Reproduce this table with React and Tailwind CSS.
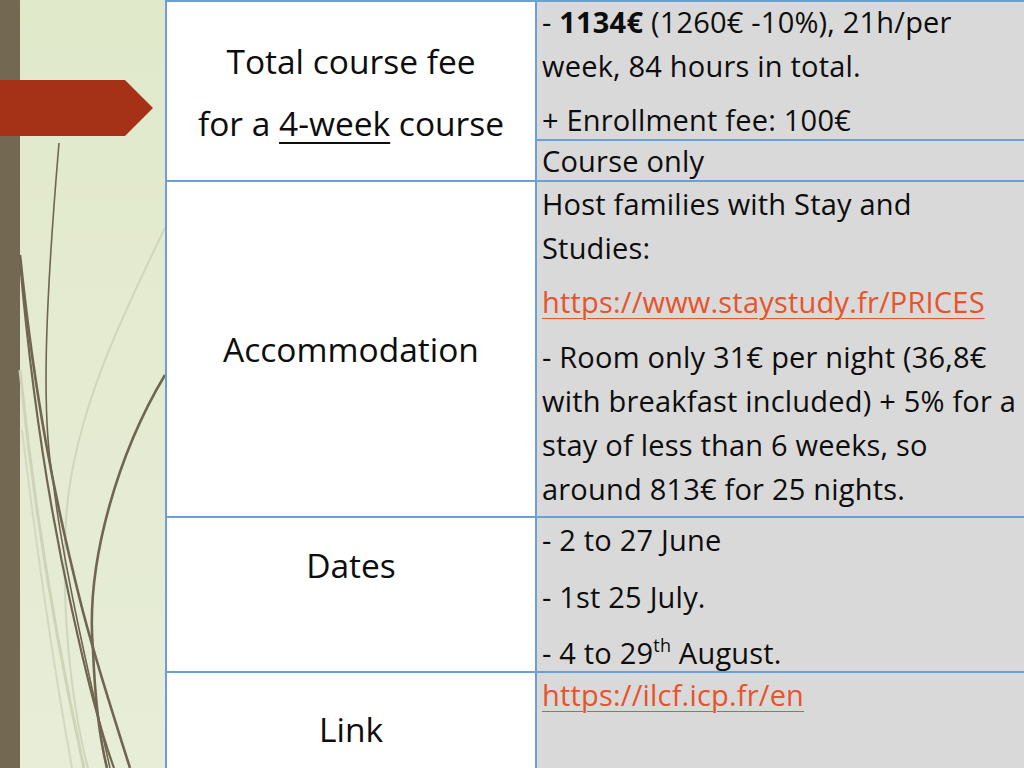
import React from 'react';

const font = { fontFamily: '"Open Sans", Lato, sans-serif' };

const SideDecor = () => (
  <div className="w-[165px] h-full shrink-0 bg-gradient-to-b from-[#e1e9cb] to-[#e7edd7]">
    <svg width="165" height="768" viewBox="0 0 165 768" className="block">
      <rect x="0" y="0" width="20" height="768" fill="#736851" />
      {/* light grass */}
      <path d="M165,228 C120,320 72,420 66,520 C61,600 70,700 88,768" stroke="#cfd6bb" strokeWidth="2" fill="none" />
      <path d="M20,370 C35,520 58,650 84,768" stroke="#cdd4b8" strokeWidth="3" fill="none" />
      <path d="M22,430 C38,560 56,680 72,768" stroke="#d3d9c0" strokeWidth="2" fill="none" />
      {/* dark grass */}
      <path d="M59,143 C44,320 42,420 53,480 C62,560 90,680 110,768" stroke="#6f6550" strokeWidth="1.6" fill="none" />
      <path d="M20,255 C35,400 55,500 80,600 C95,660 115,720 130,768" stroke="#6f6550" strokeWidth="2.6" fill="none" />
      <path d="M20,262 C33,410 52,520 72,610 C85,670 100,730 114,768" stroke="#6f6550" strokeWidth="2.2" fill="none" />
      <path d="M165,375 C120,450 85,560 93,650 C95,700 100,740 107,768" stroke="#6f6550" strokeWidth="2.6" fill="none" />
      {/* red arrow */}
      <polygon points="0,80 125,80 153,108 125,136 0,136" fill="#a53116" />
    </svg>
  </div>
);

const Line = ({ children, className = 'leading-[44px]' }) => (
  <div className={`whitespace-nowrap ${className}`}>{children}</div>
);

const Link = ({ children }) => (
  <span className="text-[#e8532a] underline decoration-1 underline-offset-[5px]">{children}</span>
);

export default function App() {
  return (
    <div className="w-[1024px] h-[768px] overflow-hidden flex bg-white text-[#0d0d0d]" style={font}>
      <SideDecor />
      <div className="flex-1 flex flex-col border-l-2 border-t-2 border-[#6b9fd9]">
        {/* row 1 */}
        <div className="grid grid-cols-[370px_1fr] grid-rows-1 h-[180px] border-b-2 border-[#6b9fd9] shrink-0">
          <div className="bg-white border-r-2 border-[#6b9fd9] text-[33.5px] leading-[62px] text-center pt-[28px]">
            <div>Total course fee</div>
            <div>
              for a <span className="underline decoration-2 underline-offset-[6px]">4-week</span> course
            </div>
          </div>
          <div className="flex flex-col text-[29px] tracking-[0.2px] overflow-hidden">
            <div className="h-[139px] bg-[#d9d9d9] border-b-2 border-[#6b9fd9] px-[5px] overflow-hidden shrink-0">
              <Line className="leading-[44px] -mt-[2px]">
                - <b className="font-bold">1134€</b> (1260€ -10%), 21h/per
              </Line>
              <Line>week, 84 hours in total.</Line>
              <Line className="leading-[44px] mt-[10px]">+ Enrollment fee: 100€</Line>
            </div>
            <div className="flex-1 bg-[#d9d9d9] px-[5px]">
              <Line className="leading-[39px]">Course only</Line>
            </div>
          </div>
        </div>

        {/* row 2 */}
        <div className="grid grid-cols-[370px_1fr] grid-rows-1 h-[336px] border-b-2 border-[#6b9fd9] shrink-0">
          <div className="bg-white border-r-2 border-[#6b9fd9] text-[33.5px] flex items-center justify-center">
            Accommodation
          </div>
          <div className="bg-[#d9d9d9] text-[29px] tracking-[0.2px] px-[5px] overflow-hidden">
            <Line>Host families with Stay and</Line>
            <Line>Studies:</Line>
            <Line className="leading-[44px] mt-[10px]">
              <Link>https://www.staystudy.fr/PRICES</Link>
            </Line>
            <Line className="leading-[44px] mt-[11px]">- Room only 31€ per night (36,8€</Line>
            <Line>with breakfast included) + 5% for a</Line>
            <Line>stay of less than 6 weeks, so</Line>
            <Line>around 813€ for 25 nights.</Line>
          </div>
        </div>

        {/* row 3 */}
        <div className="grid grid-cols-[370px_1fr] grid-rows-1 h-[155px] border-b-2 border-[#6b9fd9] shrink-0">
          <div className="bg-white border-r-2 border-[#6b9fd9] text-[33.5px] leading-[44px] text-center pt-[25px]">
            Dates
          </div>
          <div className="bg-[#d9d9d9] text-[29px] tracking-[0.2px] px-[5px] overflow-hidden">
            <Line>- 2 to 27 June</Line>
            <Line className="leading-[44px] mt-[13px]">- 1st 25 July.</Line>
            <Line className="leading-[44px] mt-[12px]">
              - 4 to 29<sup className="text-[18px] align-baseline relative -top-[12px]">th</sup> August.
            </Line>
          </div>
        </div>

        {/* row 4 */}
        <div className="grid grid-cols-[370px_1fr] grid-rows-1 flex-1">
          <div className="bg-white border-r-2 border-[#6b9fd9] text-[33.5px] leading-[44px] text-center pt-[34px]">
            Link
          </div>
          <div className="bg-[#d9d9d9] text-[29px] tracking-[0.2px] px-[5px]">
            <Line>
              <Link>https://ilcf.icp.fr/en</Link>
            </Line>
          </div>
        </div>
      </div>
    </div>
  );
}
